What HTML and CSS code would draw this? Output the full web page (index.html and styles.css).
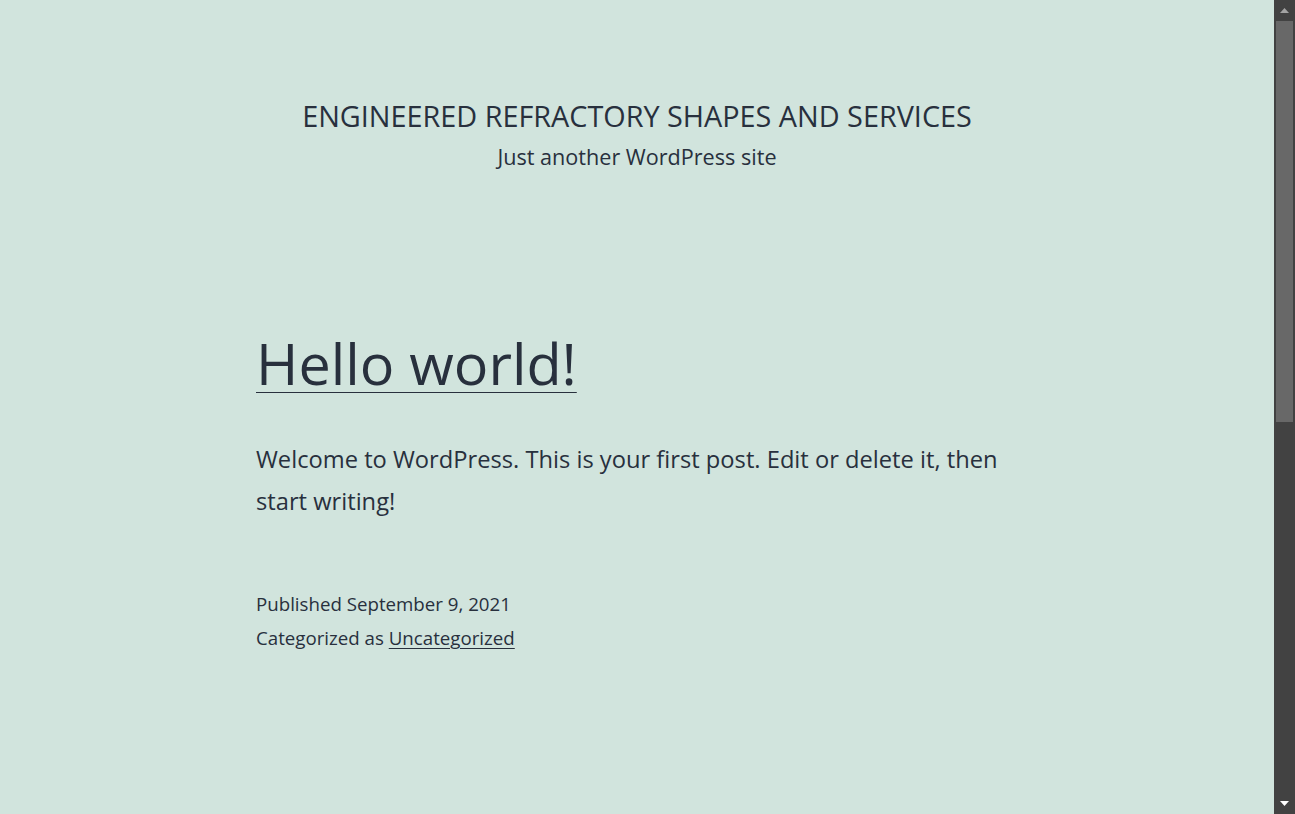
FILE: index.html
```html
<!DOCTYPE html>
<html lang="en-US">
<head>
<meta charset="UTF-8">
<title>Engineered Refractory Shapes and Services – Just another WordPress site</title>
<link rel="stylesheet" href="styles.css">
</head>
<body class="home blog">
<div class="site">
  <header class="site-header">
    <h1 class="site-title"><a href="#">Engineered Refractory Shapes and Services</a></h1>
    <p class="site-description">Just another WordPress site</p>
  </header>
  <main class="site-main">
    <article class="entry">
      <h2 class="entry-title"><a href="#">Hello world!</a></h2>
      <div class="entry-content">
        <p>Welcome to WordPress. This is your first post. Edit or delete it, then start writing!</p>
      </div>
      <footer class="entry-footer">
        <p class="posted-on">Published September 9, 2021</p>
        <p class="cat-links">Categorized as <a href="#">Uncategorized</a></p>
      </footer>
    </article>
  </main>
</div>
<div class="scrollbar" aria-hidden="true">
  <div class="scroll-btn">
    <svg width="9" height="5" viewBox="0 0 9 5"><polygon points="0,5 4.5,0 9,5" fill="#a3a3a3"/></svg>
  </div>
  <div class="scroll-track">
    <div class="scroll-thumb"></div>
  </div>
  <div class="scroll-btn">
    <svg width="9" height="5" viewBox="0 0 9 5"><polygon points="0,0 9,0 4.5,5" fill="#ffffff"/></svg>
  </div>
</div>
</body>
</html>
```

FILE: styles.css
```css
body {
  margin: 0;
  padding-right: 21px;
  background: #d1e4dd;
  color: #28303d;
  font-family: "Open Sans", "Noto Sans", sans-serif;
}

a {
  color: #28303d;
}

.site-header {
  padding-top: 96px;
  text-align: center;
}

.site-title {
  margin: 0;
  font-size: 28.8px;
  font-weight: 400;
  line-height: 39px;
  text-transform: uppercase;
}

.site-title a {
  text-decoration: none;
}

.site-description {
  margin: 6px 0 0;
  font-size: 21.6px;
  line-height: 31.5px;
}

.site-main {
  padding-top: 151px;
  padding-bottom: 120px;
}

.entry {
  max-width: 762px;
  margin: 0 auto;
}

.entry-title {
  margin: 0;
  font-size: 57.5px;
  font-weight: 400;
  line-height: 78px;
}

.entry-title a {
  text-decoration: underline;
  text-decoration-thickness: 1px;
  text-underline-offset: 7px;
}

.entry-content p {
  margin: 36px 0 0;
  font-size: 23.7px;
  line-height: 42.5px;
}

.entry-footer {
  margin-top: 64px;
  font-size: 18.7px;
  line-height: 34.5px;
}

.entry-footer p {
  margin: 0;
}

.entry-footer a {
  text-decoration: underline;
  text-decoration-thickness: 1px;
  text-underline-offset: 3px;
}

/* window scrollbar (dark) */
.scrollbar {
  position: fixed;
  top: 0;
  right: 0;
  bottom: 0;
  width: 21px;
  display: flex;
  flex-direction: column;
  background: #424242;
}

.scroll-btn {
  height: 21px;
  display: flex;
  align-items: center;
  justify-content: center;
  flex: none;
}

.scroll-btn svg {
  display: block;
}

.scroll-track {
  flex: 1;
  padding: 0 2px;
}

.scroll-thumb {
  height: 401px;
  background: #686868;
}
```
